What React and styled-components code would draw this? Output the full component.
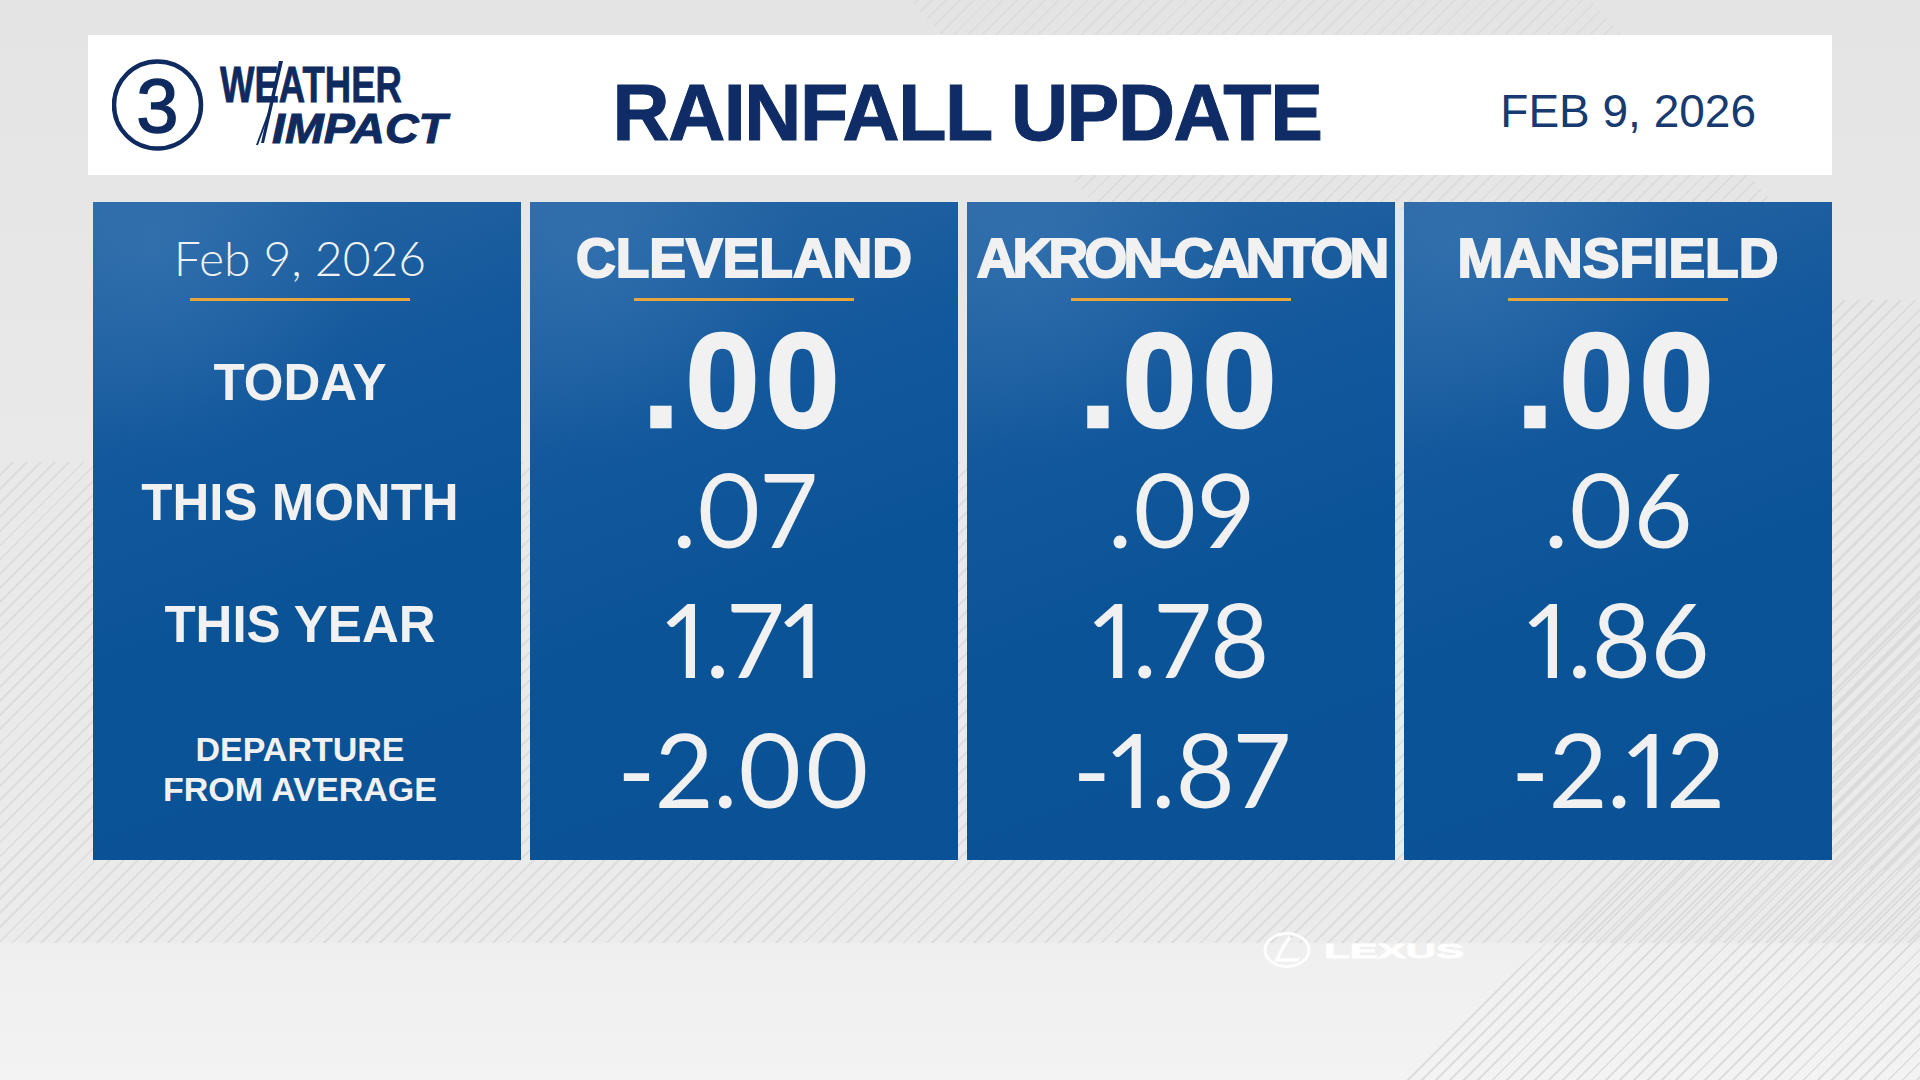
import React from 'react'
import styled, { createGlobalStyle } from 'styled-components'

const SANS = `"Liberation Sans", Arial, sans-serif`
const LIGHT = `Lato, "Open Sans", "Liberation Sans", sans-serif`

const stripes = (line) =>
    `repeating-linear-gradient(135deg, transparent 0 8px, ${line} 8px 10px)`

const GlobalStyle = createGlobalStyle`
    html, body {
        margin: 0;
        padding: 0;
    }
    body {
        width: 1920px;
        height: 1080px;
        overflow: hidden;
        background: #ebebeb;
    }
`

const Page = styled.div`
    position: relative;
    isolation: isolate;
    box-sizing: border-box;
    width: 1920px;
    height: 1080px;
    overflow: hidden;
    padding: 35px 88px 0;
    font-family: ${SANS};
    background:
        ${stripes('#dddddd')} 0 462px / 1920px 481px no-repeat,
        ${stripes('#dadada')} 1832px 300px / 88px 570px no-repeat,
        linear-gradient(180deg, #e4e4e4 0%, #e9e9e9 43%, #ebebeb 87.2%, #efefef 87.4%, #f3f3f3 100%);

    &::before,
    &::after {
        content: '';
        position: absolute;
        inset: 0;
        z-index: -1;
        background: ${stripes('#dddddd')};
    }
    &::before {
        clip-path: polygon(910px 0, 1590px 0, 1780px 210px, 1100px 210px);
    }
    &::after {
        clip-path: polygon(1400px 1080px, 1920px 1080px, 1920px 590px);
    }
`

const Header = styled.header`
    display: grid;
    grid-template-columns: 1fr auto 1fr;
    align-items: center;
    height: 140px;
    background: #ffffff;
`

const LogoArt = styled.svg`
    display: block;
    margin-left: 24px;
`

const Title = styled.h1`
    margin: 0;
    padding: 14px 0 0 14px;
    font: 700 79px/1 ${SANS};
    letter-spacing: -1.4px;
    -webkit-text-stroke: 1px currentColor;
    color: #0f2c66;
`

const HeaderDate = styled.div`
    justify-self: end;
    padding: 12px 76px 0 0;
    font: 400 46px/1 ${SANS};
    color: #173b70;
`

const Board = styled.div`
    display: grid;
    grid-template-columns: repeat(4, 1fr);
    gap: 9px;
    height: 658px;
    margin: 27px 0 0 5px;
`

const Column = styled.section`
    display: flex;
    flex-direction: column;
    align-items: center;
    box-sizing: border-box;
    padding: 28px ${(p) => (p.$label ? '14px' : '0')} 0 0;
    background:
        radial-gradient(ellipse 70% 45% at 15% 8%, rgba(80, 140, 200, 0.28), transparent 70%),
        linear-gradient(160deg, #2a67a4 0%, #13589c 32%, #0b5397 58%, #0a5195 100%);
    color: #f1f1f1;
`

const Heading = styled.h2`
    margin: 0;
    height: 56px;
    font: 700 55px/56px ${SANS};
    letter-spacing: ${(p) => (p.$tight ? '-3.8px' : '0')};
    -webkit-text-stroke: 2px currentColor;
    white-space: nowrap;
`

const DateHeading = styled.div`
    height: 56px;
    font: 300 48px/56px ${LIGHT};
    white-space: nowrap;
`

const Rule = styled.div`
    width: 220px;
    height: 3px;
    margin: 12px 0 15px;
    background: #e8a53c;
`

const Cell = styled.div`
    display: flex;
    flex-direction: column;
    align-items: center;
    justify-content: center;
    flex: none;
    height: ${(p) => p.$h || 130}px;
    text-align: center;
    white-space: nowrap;
`

const Label = styled(Cell)`
    font: 700 ${(p) => (p.$small ? '34px/40px' : '51px/1')} ${SANS};
`

const Value = styled(Cell)`
    font-family: ${SANS};
    font-size: 102px;
    font-weight: 400;
    line-height: 1;
`

const FigureValue = styled(Value)`
    font-family: ${LIGHT};
    font-variant-numeric: proportional-nums;
    padding-bottom: 4px;
    box-sizing: border-box;
`

const BigValue = styled(Value)`
    font-size: 133px;
    font-weight: 700;
    letter-spacing: 6px;
    -webkit-text-stroke: 2.5px currentColor;
`

const Sponsor = styled.div`
    margin: 71px 0 0 1175px;
    opacity: 0.95;
`

const cities = [
    { name: 'CLEVELAND', today: '.00', month: '.07', year: '1.71', dep: '-2.00' },
    { name: 'AKRON-CANTON', today: '.00', month: '.09', year: '1.78', dep: '-1.87', tight: true },
    { name: 'MANSFIELD', today: '.00', month: '.06', year: '1.86', dep: '-2.12' },
]

const Logo = () => (
    <LogoArt width="340" height="100" viewBox="0 0 340 100">
        <circle cx="45.5" cy="50" r="43.5" fill="none" stroke="#0f2a5f" strokeWidth="4.5" />
        <text x="45.5" y="77" textAnchor="middle" fontFamily={SANS} fontSize="76"
            fill="#0f2a5f" stroke="#0f2a5f" strokeWidth="1.5">
            3
        </text>
        <text x="108" y="47" textLength="182" lengthAdjust="spacingAndGlyphs"
            fontFamily={SANS} fontWeight="700" fontSize="50" fill="#0f2a5f"
            stroke="#0f2a5f" strokeWidth="0.8">
            WEATHER
        </text>
        <text x="160" y="88" textLength="175" lengthAdjust="spacingAndGlyphs"
            fontFamily={SANS} fontWeight="700" fontStyle="italic" fontSize="42"
            fill="#0f2a5f" stroke="#0f2a5f" strokeWidth="1">
            IMPACT
        </text>
        <polygon points="167,6 171,6 152,88 149,88" fill="#0f2a5f" />
        <polygon points="158,52 160,52 146,90 144,90" fill="#0f2a5f" />
    </LogoArt>
)

const LexusLogo = () => (
    <svg width="205" height="40" viewBox="0 0 205 40">
        <ellipse cx="24" cy="19" rx="22" ry="16.5" fill="none" stroke="#ffffff" strokeWidth="3" />
        <path d="M27 6 C22 12 17 22 14 29 L36 29" fill="none" stroke="#ffffff" strokeWidth="3.5" />
        <text x="61" y="27" textLength="140" lengthAdjust="spacingAndGlyphs"
            fontFamily={SANS} fontWeight="700" fontSize="21" fill="#ffffff"
            stroke="#ffffff" strokeWidth="0.8">
            LEXUS
        </text>
    </svg>
)

function App() {
    return (
        <React.Fragment>
            <GlobalStyle />
            <Page>
                <Header>
                    <Logo />
                    <Title>RAINFALL UPDATE</Title>
                    <HeaderDate>FEB 9, 2026</HeaderDate>
                </Header>

                <Board>
                    <Column $label>
                        <DateHeading>Feb 9, 2026</DateHeading>
                        <Rule />
                        <Label $h={132}>TODAY</Label>
                        <Label $h={108}>THIS MONTH</Label>
                        <Label $h={136}>THIS YEAR</Label>
                        <Label $h={154} $small>
                            <span>DEPARTURE</span>
                            <span>FROM AVERAGE</span>
                        </Label>
                    </Column>

                    {cities.map((city) => (
                        <Column key={city.name}>
                            <Heading $tight={city.tight}>{city.name}</Heading>
                            <Rule />
                            <BigValue>{city.today}</BigValue>
                            <FigureValue>{city.month}</FigureValue>
                            <FigureValue>{city.year}</FigureValue>
                            <FigureValue>{city.dep}</FigureValue>
                        </Column>
                    ))}
                </Board>

                <Sponsor>
                    <LexusLogo />
                </Sponsor>
            </Page>
        </React.Fragment>
    )
}

export default App
